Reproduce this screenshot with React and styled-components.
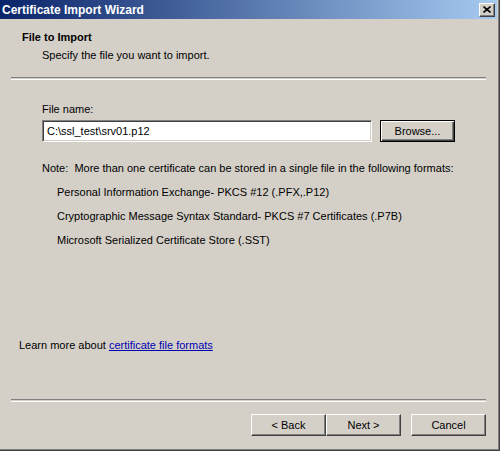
import React from 'react';
import styled, { createGlobalStyle } from 'styled-components';

const GlobalStyle = createGlobalStyle`
  html, body {
    margin: 0;
    padding: 0;
    background: #d4d0c8;
  }
  body {
    font-family: "Liberation Sans", Arial, sans-serif;
    font-size: 11px;
    color: #000;
  }
`;

const Window = styled.div`
  width: 500px;
  height: 451px;
  box-sizing: border-box;
  display: flex;
  flex-direction: column;
  background: #d4d0c8;
  padding: 0 2px 2px 0;
  border-right: 1px solid #404040;
  border-bottom: 1px solid #404040;
  box-shadow: inset -1px -1px 0 #808080;
`;

const TitleBar = styled.div`
  height: 19px;
  flex: none;
  display: flex;
  align-items: center;
  justify-content: space-between;
  padding: 0 2px;
  background: linear-gradient(to right, #0a246a, #a6caf0);
  color: #fff;
  font-weight: bold;
  font-size: 12px;
`;

const CloseButton = styled.div`
  width: 16px;
  height: 14px;
  box-sizing: border-box;
  display: flex;
  align-items: center;
  justify-content: center;
  background: #d4d0c8;
  border-top: 1px solid #fff;
  border-left: 1px solid #fff;
  border-right: 1px solid #404040;
  border-bottom: 1px solid #404040;
  box-shadow: inset -1px -1px 0 #808080;
`;

const Header = styled.div`
  height: 58px;
  flex: none;
  padding: 12px 0 0 22px;
  box-sizing: border-box;
`;

const HeaderTitle = styled.div`
  font-weight: bold;
  height: 13px;
  line-height: 13px;
`;

const HeaderText = styled.div`
  margin: 5px 0 0 20px;
  height: 13px;
  line-height: 13px;
`;

const Separator = styled.div`
  flex: none;
  margin: 0 11px;
  height: 1px;
  border-top: 1px solid #808080;
  border-bottom: 1px solid #fff;
`;

const Body = styled.div`
  flex: 1;
  display: flex;
  flex-direction: column;
  padding: 23px 0 0 42px;
`;

const Label = styled.div`
  height: 13px;
  line-height: 13px;
`;

const FileRow = styled.div`
  display: flex;
  align-items: center;
  gap: 8px;
  margin-top: 4px;
`;

const TextInput = styled.div`
  width: 330px;
  height: 22px;
  box-sizing: border-box;
  background: #fff;
  border-top: 1px solid #808080;
  border-left: 1px solid #808080;
  border-right: 1px solid #fff;
  border-bottom: 1px solid #fff;
  box-shadow: inset 1px 1px 0 #404040, inset -1px -1px 0 #d4d0c8;
  padding: 0 4px;
  display: flex;
  align-items: center;
`;

const Button = styled.div`
  width: 75px;
  height: 22px;
  box-sizing: border-box;
  display: flex;
  align-items: center;
  justify-content: center;
  background: #d4d0c8;
  border: 1px solid ${p => (p.$default ? '#000' : '#fff')};
  border-right-color: ${p => (p.$default ? '#000' : '#404040')};
  border-bottom-color: ${p => (p.$default ? '#000' : '#404040')};
  box-shadow: ${p =>
    p.$default
      ? 'inset 1px 1px 0 #fff, inset -1px -1px 0 #404040, inset -2px -2px 0 #808080'
      : 'inset -1px -1px 0 #808080'};
`;

const Note = styled.div`
  margin-top: 20px;
  height: 13px;
  line-height: 13px;
`;

const FormatList = styled.div`
  display: flex;
  flex-direction: column;
  gap: 11px;
  margin: 11px 0 0 15px;
`;

const Format = styled.div`
  height: 13px;
  line-height: 13px;
`;

const LearnMore = styled.div`
  margin: auto 0 47px -23px;
  height: 13px;
  line-height: 13px;
`;

const Link = styled.a`
  color: #0000b0;
  text-decoration: underline;
  cursor: pointer;
`;

const Footer = styled.div`
  height: 46px;
  flex: none;
  display: flex;
  justify-content: flex-end;
  gap: 10px;
  padding: 12px 11px 0 0;
  box-sizing: border-box;
`;

const ButtonGroup = styled.div`
  display: flex;
`;

const App = () => {
  return (
    <>
      <GlobalStyle />
      <Window>
        <TitleBar>
          <span>Certificate Import Wizard</span>
          <CloseButton>
            <svg width="8" height="7" viewBox="0 0 8 7">
              <path d="M0.5 0.5 L7.5 6.5 M7.5 0.5 L0.5 6.5" stroke="#000" strokeWidth="1.6" />
            </svg>
          </CloseButton>
        </TitleBar>

        <Header>
          <HeaderTitle>File to Import</HeaderTitle>
          <HeaderText>Specify the file you want to import.</HeaderText>
        </Header>
        <Separator />

        <Body>
          <Label>File name:</Label>
          <FileRow>
            <TextInput>C:\ssl_test\srv01.p12</TextInput>
            <Button $default>Browse...</Button>
          </FileRow>

          <Note>Note:&nbsp; More than one certificate can be stored in a single file in the following formats:</Note>
          <FormatList>
            <Format>Personal Information Exchange- PKCS #12 (.PFX,.P12)</Format>
            <Format>Cryptographic Message Syntax Standard- PKCS #7 Certificates (.P7B)</Format>
            <Format>Microsoft Serialized Certificate Store (.SST)</Format>
          </FormatList>

          <LearnMore>
            Learn more about <Link>certificate file formats</Link>
          </LearnMore>
        </Body>
        <Separator />

        <Footer>
          <ButtonGroup>
            <Button>&lt; Back</Button>
            <Button>Next &gt;</Button>
          </ButtonGroup>
          <Button>Cancel</Button>
        </Footer>
      </Window>
    </>
  );
};

export default App;
